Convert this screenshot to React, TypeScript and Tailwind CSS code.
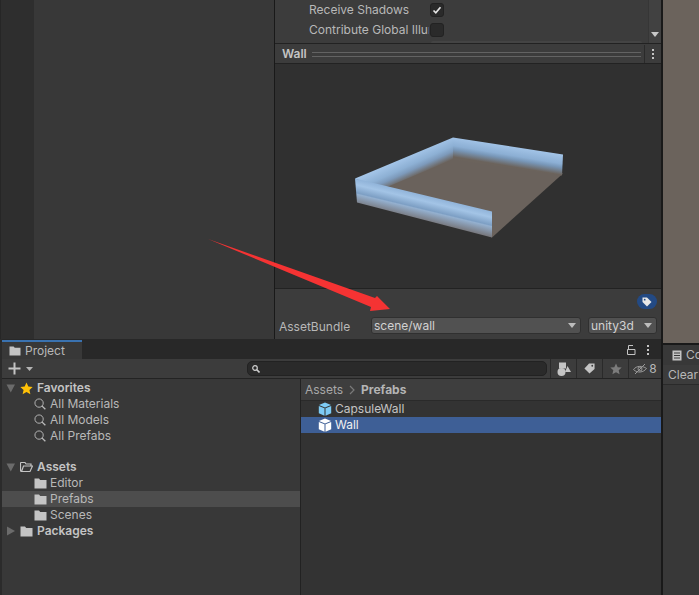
const Folder = ({ open = false, className = '' }: { open?: boolean; className?: string }) => (
  <svg viewBox="0 0 13 12" className={`w-[13px] h-[12px] ${className}`}>
    {open ? (
      <path d="M0.5 1.5h4.5l1 1.5h5v2h-7.5l-2 5.5h8.5l2.5-5.5h-1M0.5 1.5v9" fill="none" stroke="#c4c4c4" strokeWidth="1.2" />
    ) : (
      <path d="M0.5 1.5h4.5l1.2 1.5h6.3v8.5h-12z" fill="#c4c4c4" />
    )}
  </svg>
)

const Toggle = ({ open }: { open: boolean }) => (
  <svg viewBox="0 0 10 10" className="w-[10px] h-[10px] shrink-0">
    {open ? <path d="M0.5 1.5h8.5l-4.250 8z" fill="#6b6b6b" /> : <path d="M1 0.5l8 4.500-8 4.500z" fill="#6b6b6b" />}
  </svg>
)

const Magnifier = () => (
  <svg viewBox="0 0 13 13" className="w-[12px] h-[12px] shrink-0" fill="none" stroke="#bdbdbd" strokeWidth="1">
    <circle cx="5.500" cy="5.500" r="4.500" />
    <path d="M8.800 8.800l3.500 3.500" strokeWidth="1.500" />
  </svg>
)

const Cube = ({ color }: { color: string }) => (
  <svg viewBox="0 0 14 14" className="w-[14px] h-[14px] shrink-0">
    <path d="M7 0.500l6 2.500-6 2.500-6-2.500z" fill={color} />
    <path d="M0.800 3.900l5.700 2.400v7.400l-5.700-2.500z" fill={color} />
    <path d="M13.200 3.900l-5.700 2.400v7.400l5.700-2.500z" fill={color} />
  </svg>
)

const TreeItem = ({ label, selected = false }: { label: string; selected?: boolean }) => (
  <div className={`h-4 flex items-center pl-[32px] gap-[3px] ${selected ? 'bg-[#4d4d4d]' : ''}`}>
    <Folder />
    <span>{label}</span>
  </div>
)

const SearchItem = ({ label }: { label: string }) => (
  <div className="h-4 flex items-center pl-[32px] gap-[4px]">
    <Magnifier />
    <span>{label}</span>
  </div>
)

const ToolButton = ({ children }: { children: React.ReactNode }) => (
  <div className="w-[26px] h-full border-l border-[#2a2a2a] flex items-center justify-center">{children}</div>
)

const Caret = () => (
  <svg viewBox="0 0 8 5" className="w-[8px] h-[5px] shrink-0">
    <path d="M0 0h8l-4 5z" fill="#bdbdbd" />
  </svg>
)

const Dots = () => (
  <div className="flex flex-col gap-[2px] items-center">
    <div className="w-[2px] h-[2px] bg-[#c4c4c4]" />
    <div className="w-[2px] h-[2px] bg-[#c4c4c4]" />
    <div className="w-[2px] h-[2px] bg-[#c4c4c4]" />
  </div>
)

const Model = () => (
  <svg viewBox="275 65 386 223" className="w-full h-full block">
    <defs>
      <linearGradient id="front" gradientUnits="userSpaceOnUse" x1="424" y1="195" x2="418" y2="220">
        <stop offset="0" stopColor="#8fb2d8" />
        <stop offset="0.25" stopColor="#a3c4e6" />
        <stop offset="0.55" stopColor="#7d9fc4" />
        <stop offset="0.6" stopColor="#94b0cf" />
        <stop offset="1" stopColor="#77777c" />
      </linearGradient>
      <linearGradient id="back" gradientUnits="userSpaceOnUse" x1="511" y1="146" x2="507" y2="170">
        <stop offset="0" stopColor="#a4c5e8" />
        <stop offset="0.4" stopColor="#8cafd4" />
        <stop offset="0.55" stopColor="#7897b8" />
        <stop offset="0.85" stopColor="#6b635c" />
      </linearGradient>
      <linearGradient id="side" gradientUnits="userSpaceOnUse" x1="404" y1="158" x2="414" y2="180">
        <stop offset="0" stopColor="#a4c5e8" />
        <stop offset="0.4" stopColor="#8db0d4" />
        <stop offset="0.6" stopColor="#7d9abb" />
        <stop offset="0.9" stopColor="#6b635c" />
      </linearGradient>
    </defs>
    <path d="M381 186L453 153L563 174L492 238L400 200z" fill="#6a625c" />
    <path d="M355 179L453 138L453 160L381 190z" fill="url(#side)" />
    <path d="M453 138L563 155L562 176L453 160z" fill="url(#back)" />
    <path d="M355 179L492 212L492 238L357 203z" fill="url(#front)" />
  </svg>
)

export default function App() {
  return (
    <div className="w-[699px] h-[595px] overflow-hidden bg-[#191919] flex text-[12px] leading-none text-[#b8b8b8] relative font-['Inter',sans-serif]">
      {/* Left column - hierarchy, inspector, project */}
      <div className="w-[661px] shrink-0 flex flex-col">
        <div className="h-[339px] flex shrink-0">
          <div className="w-[274px] shrink-0 flex">
            <div className="w-[34px] bg-[#2e2e2e] border-l border-[#262626]" />
            <div className="flex-1 bg-[#383838]" />
          </div>
          <div className="w-px bg-[#191919]" />

          {/* Inspector */}
          <div className="flex-1 flex flex-col bg-[#3c3c3c]">
            <div className="h-[43px] shrink-0 flex">
              <div className="flex-1 pl-[34px] flex flex-col">
                <div className="h-5 flex items-center">
                  <span className="w-[121px] whitespace-nowrap">Receive Shadows</span>
                  <div className="w-[14px] h-[14px] rounded-[3px] bg-[#2a2a2a] border border-[#222] flex items-center justify-center">
                    <svg viewBox="0 0 10 10" className="w-[10px] h-[10px]" fill="none" stroke="#e4e4e4" strokeWidth="1.700">
                      <path d="M1.500 5.500l2.300 2.300 4.700-5.600" />
                    </svg>
                  </div>
                </div>
                <div className="h-5 flex items-center">
                  <span className="w-[120px] mr-px overflow-hidden whitespace-nowrap">Contribute Global Illumination</span>
                  <div className="w-[14px] h-[14px] rounded-[3px] bg-[#2a2a2a] border border-[#222]" />
                </div>
                <div className="h-[2px] w-[211px] ml-[122px] mt-px rounded-t-[2px] bg-[#444444]" />
              </div>
              <div className="w-[13px] bg-[#414141] border-l border-[#363636] flex flex-col justify-end items-center pb-[6px]">
                <svg viewBox="0 0 8 5" className="w-[8px] h-[5px]">
                  <path d="M0 0h8l-4 5z" fill="#c8c8c8" />
                </svg>
              </div>
            </div>
            <div className="h-px bg-[#222]" />

            {/* Preview header */}
            <div className="h-5 shrink-0 flex items-center pl-[7px] pt-px bg-[#3c3c3c] border-b border-[#222]">
              <span className="font-semibold text-[#c4c4c4] w-[30px]">Wall</span>
              <div className="flex-1 h-[5px] mr-[3px] border-y border-[#636363]" />
              <div className="w-[17px] h-full border-l border-[#2a2a2a] flex items-center justify-center">
                <Dots />
              </div>
            </div>
            <div className="h-[225px] shrink-0 bg-[#303030] border-b border-[#222]">
              <Model />
            </div>

            {/* AssetBundle */}
            <div className="flex-1 flex flex-col px-[4px]">
              <div className="flex justify-end mt-[5px] mb-[8px]">
                <div className="w-[20px] h-[15px] rounded-full bg-[#234a84] flex items-center justify-center">
                  <svg viewBox="0 0 10 10" className="w-[10px] h-[10px]">
                    <path d="M0.500 0.500h4.500l4.500 4.500-4.500 4.500-4.500-4.500z" fill="#e8e8e8" />
                    <circle cx="2.700" cy="2.700" r="0.900" fill="#234a84" />
                  </svg>
                </div>
              </div>
              <div className="flex items-center">
                <span className="w-[92px] pt-[2px]">AssetBundle</span>
                <div className="w-[210px] h-[17px] rounded-[3px] bg-[#515151] border border-[#303030] flex items-center justify-between pl-[2px] pr-[4px] text-[#d2d2d2]">
                  <span>scene/wall</span>
                  <Caret />
                </div>
                <div className="w-[69px] h-[17px] ml-[7px] rounded-[3px] bg-[#515151] border border-[#303030] flex items-center justify-between pl-[2px] pr-[4px] text-[#d2d2d2]">
                  <span>unity3d</span>
                  <Caret />
                </div>
              </div>
            </div>
          </div>
        </div>

        {/* Project */}
        <div className="flex-1 flex flex-col pl-[2px] bg-[#2b2b2b] relative">
          <div className="h-5 shrink-0 flex items-stretch bg-[#282828] pt-px">
            <div className="w-[80px] border-t-2 border-[#3a72b0] bg-[#383838] flex items-center pl-[7px] gap-[4px]">
              <svg viewBox="0 0 13 12" className="w-[12px] h-[11px]">
                <path d="M0.500 1.500h4.500l1.200 1.500h6.300v8.500h-12z" fill="#c4c4c4" />
              </svg>
              <span>Project</span>
            </div>
            <div className="flex-1 flex items-center justify-end pr-[12px] gap-[11px]">
              <svg viewBox="0 0 9 10" className="w-[9px] h-[10px]" fill="none" stroke="#c4c4c4" strokeWidth="1">
                <path d="M1.500 4v-3.500h4.500M0.500 4.500h7.500v5h-7.500z" />
              </svg>
              <Dots />
            </div>
          </div>
          <div className="h-[20px] shrink-0 flex items-stretch bg-[#3c3c3c] border-b border-[#232323]">
            <div className="w-[245px] flex items-center pl-[6px] gap-[5px]">
              <svg viewBox="0 0 13 13" className="w-[13px] h-[13px]">
                <path d="M5.500 0.500h2v5h5v2h-5v5h-2v-5h-5v-2h5z" fill="#c4c4c4" />
              </svg>
              <svg viewBox="0 0 7 4" className="w-[7px] h-[4px]">
                <path d="M0 0h7l-3.500 4z" fill="#b4b4b4" />
              </svg>
            </div>
            <div className="w-[300px] my-[2px] rounded-[5px] bg-[#2a2a2a] border border-[#222] flex items-center pl-[4px]">
              <svg viewBox="0 0 8 8" className="w-[8px] h-[8px]" fill="none" stroke="#cfcfcf" strokeWidth="1.200">
                <circle cx="3" cy="3" r="2.300" />
                <path d="M4.800 4.800l2.700 2.700" strokeWidth="1.600" />
              </svg>
            </div>
            <div className="w-[3px]" />
            <ToolButton>
              <svg viewBox="0 0 14 14" className="w-[14px] h-[14px]">
                <rect x="2" y="0.500" width="7" height="6" fill="#c4c4c4" />
                <circle cx="4.500" cy="10" r="4" fill="#c4c4c4" />
                <path d="M10.500 4l3.500 6h-6z" fill="#c4c4c4" />
              </svg>
            </ToolButton>
            <ToolButton>
              <svg viewBox="0 0 12 12" className="w-[11px] h-[11px]">
                <path d="M5.500 0.500h6v6l-5.500 5-5.500-5.500z" fill="#c4c4c4" />
                <circle cx="9" cy="3" r="1" fill="#3c3c3c" />
              </svg>
            </ToolButton>
            <ToolButton>
              <svg viewBox="0 0 12 12" className="w-[12px] h-[12px]">
                <path d="M6 0.500l1.700 3.700 4 .4-3 2.700.9 4-3.600-2.100-3.600 2.100.9-4-3-2.700 4-.4z" fill="#7c7c7c" />
              </svg>
            </ToolButton>
            <div className="flex-1 border-l border-[#2a2a2a] flex items-center justify-center gap-[2px]">
              <svg viewBox="0 0 14 12" className="w-[14px] h-[12px]" fill="none" stroke="#9a9a9a" strokeWidth="1">
                <path d="M0.500 6.500c3-4 9-4 13-1-3 4-9 5-13 1zM2 11l10-10" />
                <circle cx="7" cy="6" r="2" />
              </svg>
              <span>8</span>
            </div>
          </div>

          <div className="flex-1 flex">
            {/* Folder tree */}
            <div className="w-[298px] shrink-0 bg-[#383838] pt-px">
              <div className="h-4 flex items-center pl-[4px] gap-[4px] font-semibold text-[#c4c4c4]">
                <Toggle open />
                <svg viewBox="0 0 12 12" className="w-[13px] h-[13px]">
                  <path d="M6 0.500l1.700 3.700 4 .4-3 2.700.9 4-3.600-2.100-3.600 2.100.9-4-3-2.700 4-.4z" fill="#ffc107" />
                </svg>
                <span>Favorites</span>
              </div>
              <SearchItem label="All Materials" />
              <SearchItem label="All Models" />
              <SearchItem label="All Prefabs" />
              <div className="h-[15px]" />
              <div className="h-4 flex items-center pl-[4px] gap-[4px] font-semibold text-[#c4c4c4]">
                <Toggle open />
                <Folder open />
                <span>Assets</span>
              </div>
              <TreeItem label="Editor" />
              <TreeItem label="Prefabs" selected />
              <TreeItem label="Scenes" />
              <div className="h-4 flex items-center pl-[4px] gap-[4px] font-semibold text-[#c4c4c4]">
                <Toggle open={false} />
                <Folder />
                <span>Packages</span>
              </div>
            </div>
            <div className="w-px bg-[#222]" />

            {/* Asset list */}
            <div className="flex-1 bg-[#333333] flex flex-col">
              <div className="h-[22px] shrink-0 bg-[#3e3e3e] border-b border-[#2a2a2a] flex items-center pl-[4px] gap-[6px]">
                <span className="text-[#a8a8a8]">Assets</span>
                <svg viewBox="0 0 6 10" className="w-[6px] h-[10px]" fill="none" stroke="#7a7a7a" strokeWidth="1.200">
                  <path d="M1 1l4 4-4 4" />
                </svg>
                <span className="font-bold text-[#b4b4b4]">Prefabs</span>
              </div>
              <div className="h-4 flex items-center pl-[17px] gap-[3px] text-[#c4c4c4]">
                <Cube color="#7dcbf5" />
                <span>CapsuleWall</span>
              </div>
              <div className="h-4 flex items-center pl-[17px] gap-[3px] bg-[#3e5f96] text-[#f0f0f0]">
                <Cube color="#ffffff" />
                <span>Wall</span>
              </div>
            </div>
          </div>
        </div>
      </div>

      {/* Right column - scene strip and console */}
      <div className="flex-1 flex flex-col pl-[2px]">
        <div className="h-[343px] shrink-0 bg-[#6b635c]" />
        <div className="h-[2px] shrink-0" />
        <div className="flex-1 bg-[#383838] overflow-hidden">
          <div className="h-5 flex items-center pl-[9px] gap-[4px] bg-[#383838] whitespace-nowrap">
            <svg viewBox="0 0 10 11" className="w-[10px] h-[11px] shrink-0">
              <rect x="0.500" y="0.500" width="9" height="10" fill="#c4c4c4" />
              <path d="M2 3h6M2 5.500h6M2 8h6" stroke="#383838" strokeWidth="1" />
            </svg>
            <span>Console</span>
          </div>
          <div className="h-5 flex items-center pl-[5px] bg-[#3c3c3c] border-b border-[#2a2a2a] whitespace-nowrap">
            <span>Clear</span>
          </div>
        </div>
      </div>

      {/* Red annotation arrow */}
      <svg viewBox="0 0 699 595" className="absolute inset-0 w-[699px] h-[595px] pointer-events-none">
        <path d="M208 239L375 298L377 296L390 309L370 311L371 307z" fill="#f53333" />
      </svg>
    </div>
  )
}
